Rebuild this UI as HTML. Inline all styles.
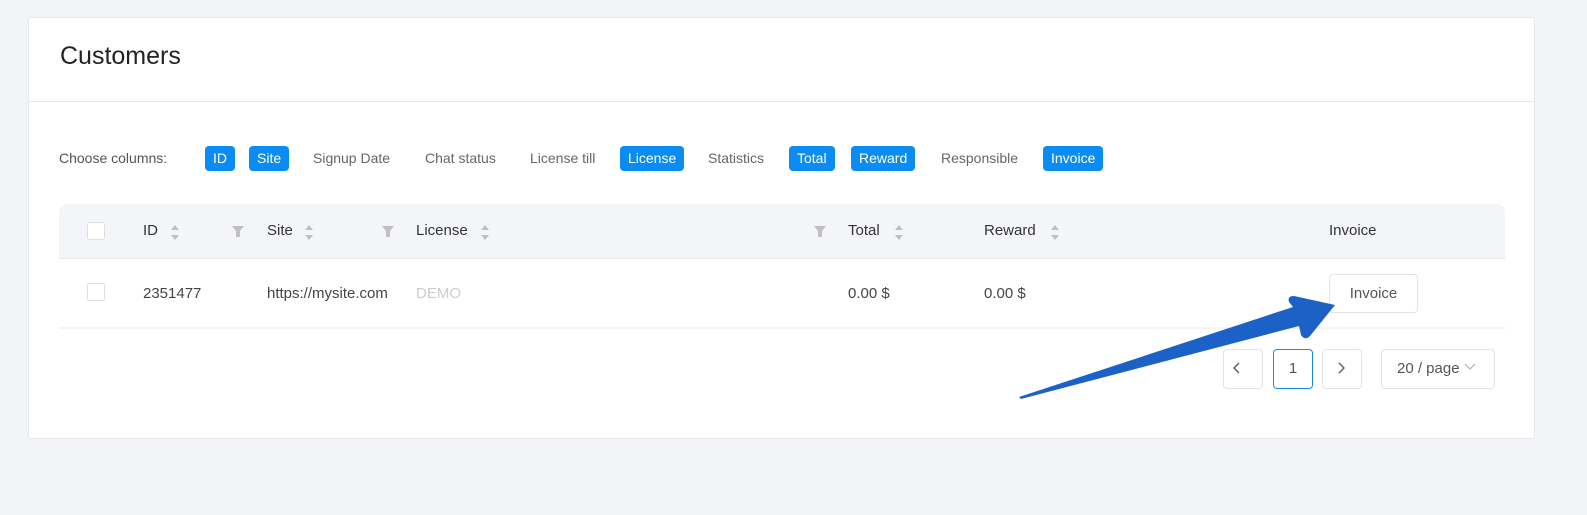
<!DOCTYPE html>
<html><head><meta charset="utf-8"><style>
*{box-sizing:border-box;margin:0;padding:0}
body{width:1587px;height:515px;background:#f3f4f8;font-family:"Liberation Sans",sans-serif;position:relative;overflow:hidden;color:#333}
.card{position:absolute;left:28px;top:17px;width:1507px;height:422px;background:#fff;border:1px solid #e6e8ee;border-radius:3px}
.hd{height:84px;border-bottom:1px solid #e6e8ee;font-size:25px;padding:24px 0 0 31px;color:#222}
.abs{position:absolute}
.tag{position:absolute;top:146px;height:25px;line-height:25px;background:#0b8cf2;color:#fff;border-radius:4px;font-size:14px;padding:0 8px}
.opt{position:absolute;top:146px;line-height:25px;font-size:14px;color:#666}
.th{position:absolute;top:204px;left:59px;width:1446px;height:55px;background:#f4f5f8;border-radius:8px 8px 0 0;border-bottom:1px solid #e8e8ee}
.t{position:absolute;font-size:15px;color:#333}
.cb{position:absolute;width:18px;height:18px;border:1px solid #ddd;border-radius:3px;background:#fff}
.btn{position:absolute;border:1px solid #e3e3e8;border-radius:4px;background:#fff;text-align:center;font-size:15px;color:#555}
</style></head><body>
<div class="card"><div class="hd">Customers</div></div>
<div class="opt" style="left:59px;color:#555">Choose columns:</div>
<div class="tag" style="left:205px">ID</div>
<div class="tag" style="left:249px">Site</div>
<div class="opt" style="left:313px">Signup Date</div>
<div class="opt" style="left:425px">Chat status</div>
<div class="opt" style="left:530px">License till</div>
<div class="tag" style="left:620px">License</div>
<div class="opt" style="left:708px">Statistics</div>
<div class="tag" style="left:789px">Total</div>
<div class="tag" style="left:851px">Reward</div>
<div class="opt" style="left:941px">Responsible</div>
<div class="tag" style="left:1043px">Invoice</div>
<div class="th"></div>
<div class="cb" style="left:87px;top:222px"></div>
<div class="t" style="left:143px;top:222px">ID</div>
<div class="t" style="left:267px;top:222px">Site</div>
<div class="t" style="left:416px;top:222px">License</div>
<div class="t" style="left:848px;top:222px">Total</div>
<div class="t" style="left:984px;top:222px">Reward</div>
<div class="t" style="left:1329px;top:222px">Invoice</div>
<svg class="abs" style="left:0;top:0" width="1587" height="515">
<g fill="#bfbfc4">
<path d="M171 230l4-5 4 5zM171 235l4 5 4-5z"/><path d="M305 230l4-5 4 5zM305 235l4 5 4-5z"/><path d="M481 230l4-5 4 5zM481 235l4 5 4-5z"/><path d="M895 230l4-5 4 5zM895 235l4 5 4-5z"/><path d="M1051 230l4-5 4 5zM1051 235l4 5 4-5z"/>
<path d="M232 226h12l-4 5v6h-4v-6z"/><path d="M382 226h12l-4 5v6h-4v-6z"/><path d="M814 226h12l-4 5v6h-4v-6z"/>
</g>
<line x1="59" y1="328" x2="1505" y2="328" stroke="#e8e8ee"/>
</svg>
<div class="cb" style="left:87px;top:283px"></div>
<div class="t" style="left:143px;top:285px;color:#444">2351477</div>
<div class="t" style="left:267px;top:285px;color:#444">https://mysite.com</div>
<div class="t" style="left:416px;top:285px;color:#ccc">DEMO</div>
<div class="t" style="left:848px;top:285px;color:#444">0.00 $</div>
<div class="t" style="left:984px;top:285px;color:#444">0.00 $</div>
<div class="btn" style="left:1329px;top:274px;width:89px;height:39px;line-height:37px">Invoice</div>
<div class="btn" style="left:1223px;top:349px;width:40px;height:40px"></div>
<div class="btn" style="left:1273px;top:349px;width:40px;height:40px;line-height:38px;border-color:#1a8fe0">1</div>
<div class="btn" style="left:1322px;top:349px;width:40px;height:40px"></div>
<div class="btn" style="left:1381px;top:349px;width:114px;height:40px;line-height:38px;text-align:left;padding-left:15px">20 / page</div>
<svg class="abs" style="left:0;top:0" width="1587" height="515"><path d="M1239 363l-5 5 5 5M1339 363l5 5-5 5" stroke="#555" stroke-width="1.3" fill="none"/><path d="M1465 364l5 5 5-5" stroke="#aaa" fill="none"/><path d="M1019 397L1293 307L1289 302Q1287 296 1294 296L1335 305L1310 336Q1305 341 1301 335L1299 326L1021 399Z" fill="#1c62c6"/></svg>
</body></html>
